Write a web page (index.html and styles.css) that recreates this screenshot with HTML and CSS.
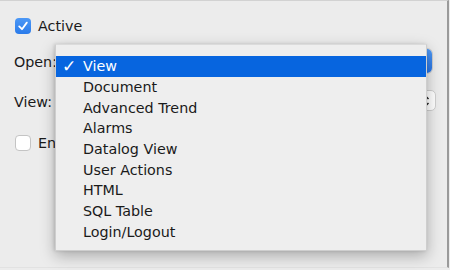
FILE: index.html
```html
<!DOCTYPE html>
<html>
<head>
<meta charset="utf-8">
<link rel="stylesheet" href="styles.css">
</head>
<body>
<div class="panel">
  <div class="row row-active">
    <span class="cb cb-on"><svg viewBox="0 0 16 16" width="16" height="16"><path d="M4.2 8.4 L7 11.2 L11.8 4.6" fill="none" stroke="#fff" stroke-width="1.8" stroke-linecap="round" stroke-linejoin="round"/></svg></span>
    <span class="lbl">Active</span>
  </div>
  <div class="row row-open">
    <span class="field-lbl">Open:</span>
    <div class="select select-focus">
      <span class="cap"><svg viewBox="0 0 10 16" width="10" height="16"><path d="M2.5 6 L5 3.5 L7.5 6 M2.5 10 L5 12.5 L7.5 10" fill="none" stroke="#fff" stroke-width="1.5"/></svg></span>
    </div>
  </div>
  <div class="row row-view">
    <span class="field-lbl">View:</span>
    <div class="select select-plain">
      <span class="cap"><svg viewBox="0 0 10 16" width="10" height="16"><path d="M2.5 6 L5 3.5 L7.5 6 M2.5 10 L5 12.5 L7.5 10" fill="none" stroke="#222" stroke-width="1.5"/></svg></span>
    </div>
  </div>
  <div class="row row-enabled">
    <span class="cb cb-off"></span>
    <span class="lbl">Enabled</span>
  </div>

  <div class="menu">
    <div class="item sel"><span class="check">✓</span><span>View</span></div>
    <div class="item"><span class="check"></span><span>Document</span></div>
    <div class="item"><span class="check"></span><span>Advanced Trend</span></div>
    <div class="item"><span class="check"></span><span>Alarms</span></div>
    <div class="item"><span class="check"></span><span>Datalog View</span></div>
    <div class="item"><span class="check"></span><span>User Actions</span></div>
    <div class="item"><span class="check"></span><span>HTML</span></div>
    <div class="item"><span class="check"></span><span>SQL Table</span></div>
    <div class="item"><span class="check"></span><span>Login/Logout</span></div>
  </div>
</div>
</body>
</html>
```

FILE: styles.css
```css
html, body {
  margin: 0;
  padding: 0;
  background: #ececec;
  width: 450px;
  height: 270px;
  overflow: hidden;
}
body {
  font-family: "DejaVu Sans", "Liberation Sans", sans-serif;
  font-size: 14.3px;
  color: #1a1a1a;
}
.panel {
  position: relative;
  box-sizing: border-box;
  width: 449px;
  height: 268px;
  border-top: 1px solid #d2d2d2;
  border-right: 2px solid #9a9a9a;
  border-bottom: 1px solid #e2e2e2;
  padding: 17px 0 0 0;
  display: flex;
  flex-direction: column;
}
.row {
  display: flex;
  align-items: center;
}
.row-active {
  height: 16px;
  padding-left: 15px;
  margin-bottom: 15px;
}
.row-open {
  height: 24px;
  padding-left: 14px;
  margin-bottom: 17px;
}
.row-view {
  height: 21px;
  padding-left: 14px;
  margin-bottom: 24px;
}
.row-enabled {
  height: 16px;
  padding-left: 15px;
}
.cb {
  box-sizing: border-box;
  width: 16px;
  height: 16px;
  border-radius: 4px;
  flex: none;
  display: flex;
}
.cb-on {
  background: linear-gradient(#4c98f6, #2a7bea);
}
.cb-off {
  background: #fff;
  border: 1px solid #c4c4c4;
}
.lbl {
  margin-left: 7px;
  line-height: 16px;
}
.field-lbl {
  width: 42px;
  flex: none;
  padding-top: 2px;
}
.select {
  flex: 1;
  box-sizing: border-box;
  display: flex;
  align-items: center;
  justify-content: flex-end;
  border-radius: 5px;
  background: #fff;
  height: 100%;
}
.select-focus {
  margin-right: 15px;
  box-shadow: 0 0 0 1px rgba(0,0,0,0.12);
}
.select-plain {
  margin-right: 11px;
  border: 1px solid #cfcfcf;
}
.cap {
  display: flex;
  align-items: center;
  justify-content: center;
  height: 100%;
  width: 18px;
  border-radius: 0 5px 5px 0;
}
.select-focus .cap {
  background: linear-gradient(#509af7, #2674e6);
  width: 20px;
}
.menu {
  position: absolute;
  left: 55px;
  top: 43px;
  width: 372px;
  height: 207px;
  box-sizing: border-box;
  padding-top: 11px;
  background: #eeeeee;
  border: 1px solid rgba(0,0,0,0.13);
  border-top-color: rgba(0,0,0,0.08);
  box-shadow: 0 5px 14px rgba(0,0,0,0.28), -1px 0 3px rgba(0,0,0,0.12);
}
.item {
  display: flex;
  align-items: center;
  height: 20.7px;
  color: #1a1a1a;
}
.item.sel {
  background: #0765df;
  color: #fff;
}
.check {
  box-sizing: border-box;
  width: 27px;
  flex: none;
  padding-left: 6px;
  font-size: 17px;
  line-height: 1;
}
```
